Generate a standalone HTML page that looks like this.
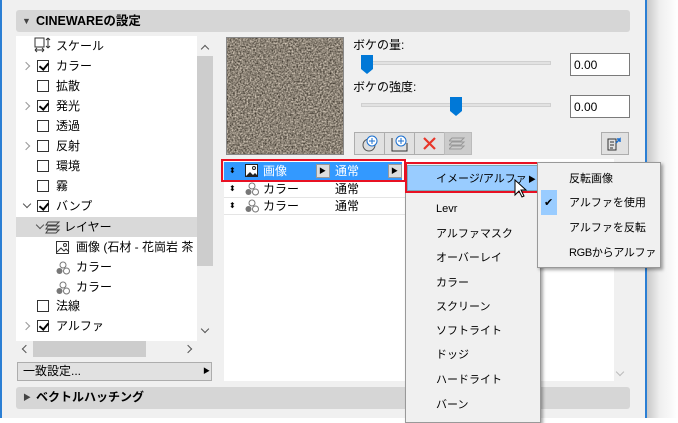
<!DOCTYPE html>
<html><head><meta charset="utf-8"><style>
*{box-sizing:border-box;margin:0;padding:0}
body{width:678px;height:418px;overflow:hidden;background:#fff;position:relative;font-family:"Liberation Sans","Noto Sans CJK JP",sans-serif;font-size:12px;color:#000}
.a{position:absolute}
.t{position:absolute;white-space:nowrap;line-height:14px}
.cb{position:absolute;width:12px;height:12px;border:1px solid #333;background:#fff}
.cb.on::after{content:"";position:absolute;left:3px;top:0px;width:4px;height:7px;border:solid #000;border-width:0 2px 2px 0;transform:rotate(40deg)}
.chev{position:absolute;width:6px;height:6px;border:solid #999;border-width:1.5px 1.5px 0 0;transform:rotate(45deg)}
.chev.d{transform:rotate(135deg);border-color:#555}
.btn{position:absolute;top:132px;width:31px;height:23px;border:1px solid #adadad;background:#e1e1e1}
.mi{position:absolute;left:436px;font-size:11px}
.sm{font-size:11px}
</style></head><body>
<div class="a" style="left:0;top:0;width:645px;height:418px;background:#f0f0f0;border-left:2px solid #2b7fd4"></div>
<div class="a" style="left:645px;top:0;width:2px;height:418px;background:#2b7fd4"></div>
<div class="a" style="left:647px;top:0;width:31px;height:418px;background:linear-gradient(to right,#c8c8c8,#eee 40%,#fff)"></div>

<div class="a" style="left:16px;top:10px;width:614px;height:22px;background:#d6d6d6;border-radius:3px"></div>
<div class="t" style="left:22px;top:14px;font-size:9px;color:#444">▼</div>
<div class="t" style="left:36px;top:14px;font-weight:bold;font-size:12.5px">CINEWAREの設定</div>

<div class="a" style="left:16px;top:36px;width:181px;height:305px;background:#fff"></div>
<div class="a" style="left:197px;top:36px;width:16px;height:305px;background:#f0f0f0"></div>
<div class="a" style="left:197px;top:56px;width:16px;height:210px;background:#cdcdcd"></div>
<div class="chev" style="left:202px;top:46px;transform:rotate(-45deg);border-color:#555"></div>
<div class="chev d" style="left:202px;top:326px"></div>
<div class="a" style="left:16px;top:341px;width:181px;height:16px;background:#f0f0f0"></div>
<div class="a" style="left:33px;top:341px;width:113px;height:16px;background:#cdcdcd"></div>
<div class="chev" style="left:23px;top:346px;transform:rotate(-135deg);border-color:#555"></div>
<div class="chev" style="left:185px;top:346px;border-color:#555"></div>

<svg class="a" style="left:33px;top:37px" width="20" height="18"><rect x="2" y="1" width="9" height="9" fill="none" stroke="#333"/><path d="M2 13h9M2 13l2-2M2 13l2 2M11 13l-2-2M11 13l-2 2M15 1v10M15 1l-2 2M15 1l2 2M15 11l-2-2M15 11l2-2" stroke="#333" fill="none"/></svg>
<div class="t" style="left:56px;top:39px">スケール</div>
<div class="chev" style="left:23px;top:63px"></div><div class="cb on" style="left:37px;top:60px"></div><div class="t" style="left:56px;top:59px">カラー</div>
<div class="cb" style="left:37px;top:80px"></div><div class="t" style="left:56px;top:79px">拡散</div>
<div class="chev" style="left:23px;top:103px"></div><div class="cb on" style="left:37px;top:100px"></div><div class="t" style="left:56px;top:99px">発光</div>
<div class="cb" style="left:37px;top:120px"></div><div class="t" style="left:56px;top:119px">透過</div>
<div class="chev" style="left:23px;top:143px"></div><div class="cb" style="left:37px;top:140px"></div><div class="t" style="left:56px;top:139px">反射</div>
<div class="cb" style="left:37px;top:160px"></div><div class="t" style="left:56px;top:159px">環境</div>
<div class="cb" style="left:37px;top:180px"></div><div class="t" style="left:56px;top:179px">霧</div>
<div class="chev d" style="left:24px;top:201px"></div><div class="cb on" style="left:37px;top:200px"></div><div class="t" style="left:56px;top:199px">バンプ</div>
<div class="a" style="left:16px;top:217px;width:181px;height:20px;background:#d9d9d9"></div>
<div class="chev d" style="left:37px;top:222px"></div>
<svg class="a" style="left:45px;top:220px" width="16" height="14"><path d="M3 2h11l-3 3H1zM3 6h11l-3 3H1zM3 10h11l-3 3H1z" fill="none" stroke="#444"/></svg>
<div class="t" style="left:64px;top:220px">レイヤー</div>
<svg class="a" style="left:56px;top:241px" width="14" height="14"><rect x=".5" y=".5" width="12" height="12" fill="#fff" stroke="#333"/><path d="M1 11l4-4 3 3 2-2 3 3" fill="none" stroke="#333"/><circle cx="9" cy="4" r="1.5" fill="none" stroke="#333"/></svg>
<div class="t" style="left:76px;top:240px">画像 (石材 - 花崗岩 茶</div>
<svg class="a" style="left:56px;top:261px" width="14" height="14"><circle cx="7" cy="4" r="3" fill="none" stroke="#777"/><circle cx="3.5" cy="10" r="3" fill="#777"/><circle cx="10.5" cy="10" r="3" fill="none" stroke="#777"/></svg>
<div class="t" style="left:76px;top:260px">カラー</div>
<svg class="a" style="left:56px;top:281px" width="14" height="14"><circle cx="7" cy="4" r="3" fill="none" stroke="#777"/><circle cx="3.5" cy="10" r="3" fill="#777"/><circle cx="10.5" cy="10" r="3" fill="none" stroke="#777"/></svg>
<div class="t" style="left:76px;top:280px">カラー</div>
<div class="cb" style="left:37px;top:300px"></div><div class="t" style="left:56px;top:299px">法線</div>
<div class="chev" style="left:23px;top:323px"></div><div class="cb on" style="left:37px;top:320px"></div><div class="t" style="left:56px;top:319px">アルファ</div>

<div class="a" style="left:17px;top:362px;width:195px;height:19px;background:#e1e1e1;border:1px solid #adadad"></div>
<div class="t" style="left:23px;top:364px">一致設定...</div>
<div class="t" style="left:203px;top:365px;font-size:7px">▶</div>

<div class="a" style="left:16px;top:387px;width:614px;height:22px;background:#d6d6d6;border-radius:3px"></div>
<div class="t" style="left:23px;top:391px;font-size:8px;color:#444">▶</div>
<div class="t" style="left:36px;top:390px;font-weight:bold">ベクトルハッチング</div>

<div class="a" style="left:226px;top:37px;width:118px;height:118px;border:1px solid #888;background:#877f73"></div>
<svg class="a" style="left:227px;top:38px" width="116" height="116"><filter id="n" x="0" y="0" width="100%" height="100%" color-interpolation-filters="sRGB"><feTurbulence type="fractalNoise" baseFrequency=".6" numOctaves="3"/><feColorMatrix values="0.95 0 0 0 0.07  0.92 0 0 0 0.05  0.88 0 0 0 0.02  0 0 0 0 1"/></filter><rect width="116" height="116" filter="url(#n)"/></svg>

<div class="t" style="left:353px;top:38px">ボケの量:</div>
<div class="a" style="left:361px;top:61px;width:190px;height:4px;background:#e2e2e2;border:1px solid #d0d0d0"></div>
<svg class="a" style="left:361px;top:55px" width="13" height="19"><path d="M0 0h12v14l-6 5-6-5z" fill="#0078d7"/></svg>
<div class="a" style="left:570px;top:53px;width:60px;height:23px;background:#fff;border:1px solid #7a7a7a"></div>
<div class="t" style="left:574px;top:58px">0.00</div>
<div class="t" style="left:353px;top:80px">ボケの強度:</div>
<div class="a" style="left:361px;top:103px;width:190px;height:4px;background:#e2e2e2;border:1px solid #d0d0d0"></div>
<svg class="a" style="left:450px;top:97px" width="13" height="19"><path d="M0 0h12v14l-6 5-6-5z" fill="#0078d7"/></svg>
<div class="a" style="left:570px;top:95px;width:60px;height:23px;background:#fff;border:1px solid #7a7a7a"></div>
<div class="t" style="left:574px;top:100px">0.00</div>

<div class="btn" style="left:354px"></div><svg class="a" style="left:362px;top:135px" width="18" height="18"><circle cx="7" cy="10" r="6" fill="#ddd" stroke="#555"/><circle cx="10" cy="6" r="5" fill="#fff" stroke="#1a6fd0"/><path d="M10 3v6M7 6h6" stroke="#1a6fd0"/></svg>
<div class="btn" style="left:384px"></div><svg class="a" style="left:391px;top:135px" width="18" height="18"><path d="M1 3v13h15V8" fill="none" stroke="#333"/><circle cx="10" cy="6" r="5" fill="#fff" stroke="#1a6fd0"/><path d="M10 3v6M7 6h6" stroke="#1a6fd0"/></svg>
<div class="btn" style="left:414px"></div><svg class="a" style="left:422px;top:136px" width="15" height="15"><path d="M2 2l11 11M13 2L2 13" stroke="#e8362a" stroke-width="2.2"/></svg>
<div class="btn" style="left:444px;width:28px;background:#ccc;border-color:#bbb"></div><svg class="a" style="left:449px;top:136px" width="18" height="16"><path d="M3 2h12l-3 3H0zM3 6h12l-3 3H0zM3 10h12l-3 3H0z" fill="none" stroke="#999"/></svg>
<div class="btn" style="left:601px;width:28px"></div><svg class="a" style="left:606px;top:135px" width="18" height="18"><path d="M2 4h8v11H2z M4 7h4M4 10h4M4 13h3" fill="none" stroke="#333"/><path d="M10 8l4-4v3M14 4h-3" fill="none" stroke="#1a6fd0" stroke-width="1.5"/></svg>

<div class="a" style="left:224px;top:159px;width:390px;height:222px;background:#fff"></div>
<div class="chev d" style="left:617px;top:369px;border-color:#bbb"></div>
<div class="a" style="left:224px;top:162px;width:178px;height:18px;background:#3399ff"></div>
<div class="a" style="left:221px;top:159px;width:185px;height:23px;border:2px solid #e81123"></div>
<div class="t" style="left:229px;top:164px;font-size:8px">⬍</div>
<svg class="a" style="left:245px;top:164px" width="14" height="14"><rect x=".5" y=".5" width="12" height="12" fill="#fff" stroke="#222"/><path d="M1 12l4-4 3 3 2-2 3 3z" fill="#222"/><circle cx="9" cy="4" r="1.5" fill="none" stroke="#222"/></svg>
<div class="t" style="left:263px;top:164px;color:#fff">画像</div>
<div class="a" style="left:316px;top:164px;width:14px;height:14px;background:#ddd;border:1px solid #999"></div><div class="t" style="left:319px;top:165px;font-size:7px">▶</div>
<div class="t" style="left:335px;top:164px;color:#fff">通常</div>
<div class="a" style="left:388px;top:164px;width:14px;height:14px;background:#ddd;border:1px solid #999"></div><div class="t" style="left:391px;top:165px;font-size:7px">▶</div>
<div class="a" style="left:224px;top:197px;width:181px;height:1px;background:#e5e5e5"></div>
<div class="a" style="left:224px;top:214px;width:181px;height:1px;background:#e5e5e5"></div>
<div class="t" style="left:229px;top:182px;font-size:8px">⬍</div>
<svg class="a" style="left:244px;top:182px" width="16" height="15"><circle cx="8" cy="4" r="3" fill="none" stroke="#777"/><circle cx="4.5" cy="10" r="3" fill="#777"/><circle cx="11.5" cy="10" r="3" fill="none" stroke="#777"/></svg>
<div class="t" style="left:263px;top:182px">カラー</div><div class="t" style="left:335px;top:182px">通常</div>
<div class="t" style="left:229px;top:199px;font-size:8px">⬍</div>
<svg class="a" style="left:244px;top:199px" width="16" height="15"><circle cx="8" cy="4" r="3" fill="none" stroke="#777"/><circle cx="4.5" cy="10" r="3" fill="#777"/><circle cx="11.5" cy="10" r="3" fill="none" stroke="#777"/></svg>
<div class="t" style="left:263px;top:199px">カラー</div><div class="t" style="left:335px;top:199px">通常</div>

<div class="a" style="left:405px;top:163px;width:136px;height:260px;background:#f0f0f0;border:1px solid #999;box-shadow:2px 2px 3px rgba(0,0,0,.35)"></div>
<div class="a" style="left:407px;top:165px;width:131px;height:26px;background:#99ccff;border:1px solid #7ab"></div>
<div class="a" style="left:405px;top:162px;width:135px;height:31px;border:2px solid #e81123"></div>
<div class="mi t" style="top:172px">イメージ/アルファ</div>
<div class="t" style="left:528px;top:173px;font-size:8px">▶</div>
<div class="mi t" style="top:202px">Levr</div>
<div class="mi t" style="top:227px">アルファマスク</div>
<div class="mi t" style="top:251px">オーバーレイ</div>
<div class="mi t" style="top:276px">カラー</div>
<div class="mi t" style="top:300px">スクリーン</div>
<div class="mi t" style="top:324px">ソフトライト</div>
<div class="mi t" style="top:348px">ドッジ</div>
<div class="mi t" style="top:373px">ハードライト</div>
<div class="mi t" style="top:398px">バーン</div>
<svg class="a" style="left:514px;top:179px" width="14" height="20"><path d="M1 1v15l4-4 3 6 2-1-3-6h5z" fill="#fff" stroke="#000"/></svg>

<div class="a" style="left:537px;top:162px;width:124px;height:106px;background:#f0f0f0;border:1px solid #999;box-shadow:2px 2px 3px rgba(0,0,0,.35)"></div>
<div class="t sm" style="left:569px;top:172px">反転画像</div>
<div class="a" style="left:541px;top:190px;width:16px;height:25px;background:#99ccff"></div>
<div class="t" style="left:544px;top:196px;font-size:11px">✔</div>
<div class="t sm" style="left:569px;top:196px">アルファを使用</div>
<div class="t sm" style="left:569px;top:221px">アルファを反転</div>
<div class="t sm" style="left:569px;top:246px;letter-spacing:-.3px">RGBからアルファ</div>
</body></html>
